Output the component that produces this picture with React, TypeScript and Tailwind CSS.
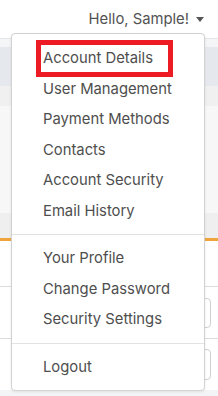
import React from "react";

const mainItems = [
  "Account Details",
  "User Management",
  "Payment Methods",
  "Contacts",
  "Account Security",
  "Email History",
];

const profileItems = ["Your Profile", "Change Password", "Security Settings"];

function MenuItem({ label }: { label: string }) {
  return (
    <div className="flex h-[30.5px] items-center pl-[31px] text-[14.8px] text-[#4e4e4e]">
      {label}
    </div>
  );
}

export default function App() {
  return (
    <div
      className="relative h-[396px] w-[218px] overflow-hidden bg-white"
      style={{ fontFamily: "Inter, 'Noto Sans', sans-serif" }}
    >
      {/* page behind the menu */}
      <header className="flex h-[38px] items-center justify-end gap-[7px] pr-[14px] text-[14.8px] text-[#525252]">
        <span>Hello, Sample!</span>
        <svg width="8" height="5" viewBox="0 0 8 5" className="mt-[1px]">
          <path d="M0 0h8L4 5z" fill="#555" />
        </svg>
      </header>
      <div className="h-px bg-[#e3e5e8]" />
      <div className="h-[8px] bg-[#f4f5f6]" />
      <div className="h-[39px] bg-[#e5e8ec]" />
      <div className="h-[20px] bg-[#f0f0f0]" />
      <div className="h-[107px] bg-[#f7f7f7]" />
      <div className="h-[25px] bg-[#efefef]" />
      <div className="h-[3px] bg-[#f0a53c]" />
      <div className="h-[45px] bg-white" />
      <div className="h-px bg-[#dcdcdc]" />
      <div className="flex h-[51px] items-center justify-end pr-[7px]">
        <div className="h-[30px] w-[60px] rounded-[4px] border border-[#cfcfcf]" />
      </div>
      <div className="h-px bg-[#dcdcdc]" />
      <div className="flex h-[51px] items-center justify-end pr-[7px]">
        <div className="h-[31px] w-[60px] rounded-[4px] border border-[#cfcfcf]" />
      </div>
      <div className="h-[6px] bg-[#f3f4f6]" />

      {/* dropdown */}
      <div className="absolute left-[11px] top-[33px] w-[194px] rounded-[4px] border border-[#d2d2d2] bg-white shadow-[0_1px_3px_rgba(0,0,0,0.08)]">
        <div className="pb-2 pt-[9px]">
          {mainItems.map((item) => (
            <MenuItem key={item} label={item} />
          ))}
        </div>
        <div className="h-px bg-[#e2e2e2]" />
        <div className="py-2">
          {profileItems.map((item) => (
            <MenuItem key={item} label={item} />
          ))}
        </div>
        <div className="h-px bg-[#e2e2e2]" />
        <div className="py-2">
          <MenuItem label="Logout" />
        </div>
      </div>

      {/* highlight */}
      <div className="absolute left-[36px] top-[40px] h-[37px] w-[137px] border-[5px] border-[#ed1c24]" />
    </div>
  );
}
